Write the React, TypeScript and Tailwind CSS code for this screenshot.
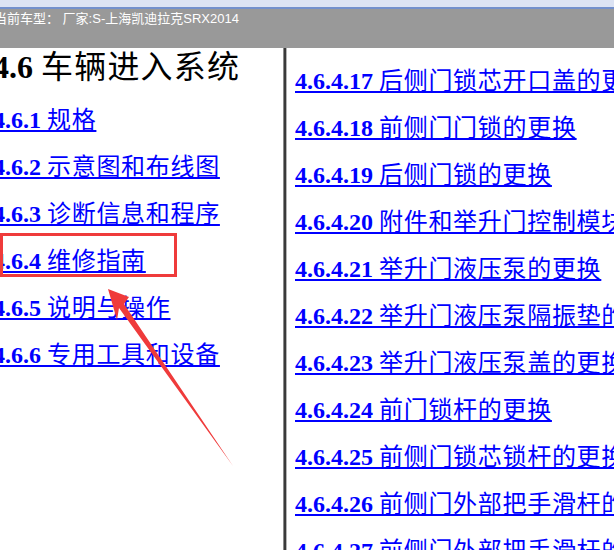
import React from "react";

type Entry = { num: string; title: string };

const chapters: Entry[] = [
  { num: "4.6.1", title: "规格" },
  { num: "4.6.2", title: "示意图和布线图" },
  { num: "4.6.3", title: "诊断信息和程序" },
  { num: "4.6.4", title: "维修指南" },
  { num: "4.6.5", title: "说明与操作" },
  { num: "4.6.6", title: "专用工具和设备" },
];

const repairs: Entry[] = [
  { num: "4.6.4.17", title: "后侧门锁芯开口盖的更换" },
  { num: "4.6.4.18", title: "前侧门门锁的更换" },
  { num: "4.6.4.19", title: "后侧门锁的更换" },
  { num: "4.6.4.20", title: "附件和举升门控制模块的更换" },
  { num: "4.6.4.21", title: "举升门液压泵的更换" },
  { num: "4.6.4.22", title: "举升门液压泵隔振垫的更换" },
  { num: "4.6.4.23", title: "举升门液压泵盖的更换" },
  { num: "4.6.4.24", title: "前门锁杆的更换" },
  { num: "4.6.4.25", title: "前侧门锁芯锁杆的更换" },
  { num: "4.6.4.26", title: "前侧门外部把手滑杆的更换" },
  { num: "4.6.4.27", title: "前侧门外部把手滑杆的更换" },
];

function TocLink({ item }: { item: Entry }) {
  return (
    <a
      href="#"
      className="block whitespace-nowrap text-[24px] leading-[47px] text-[#0000ff] underline decoration-[#0000ff]"
    >
      <b>{item.num}</b> <span className="tracking-[0.7px]">{item.title}</span>
    </a>
  );
}

export default function App() {
  return (
    <div className="relative w-[614px] h-[550px] overflow-hidden bg-white font-['Liberation_Serif','Noto_Sans_CJK_SC',serif]">
      {/* window chrome */}
      <div className="h-[7px] bg-[#dce3f3]" />
      <div className="h-[2px] bg-[#7390cc]" />
      <div className="h-[39px] bg-[#999999] overflow-hidden">
        <div className="-ml-[6px] pt-[3px] whitespace-nowrap text-[13px] leading-[13px] text-white font-['Liberation_Sans','Noto_Sans_CJK_SC',sans-serif]">
          当前车型： 厂家:S-上海凯迪拉克SRX2014
        </div>
      </div>

      <div className="flex h-[502px]">
        {/* left frame: chapter index */}
        <div className="w-[283px] overflow-hidden">
          <div className="-ml-[7px] pt-[3px]">
            <h1 className="whitespace-nowrap text-[32px] leading-[32px] text-black">
              <b>4.6</b> <span className="tracking-[1.2px]">车辆进入系统</span>
            </h1>
            <div className="mt-[14px] flex flex-col">
              {chapters.map((c) => (
                <TocLink key={c.num} item={c} />
              ))}
            </div>
          </div>
        </div>

        {/* frame splitter */}
        <div className="flex w-[4px]">
          <div className="w-[1px] bg-[#8a8a8a]" />
          <div className="w-[2px] bg-[#3a3a3a]" />
          <div className="w-[1px] bg-[#b4b4b4]" />
        </div>

        {/* right frame: repair procedures */}
        <div className="flex-1 overflow-hidden pl-[8px] pt-[10px]">
          <div className="flex flex-col">
            {repairs.map((r) => (
              <TocLink key={r.num} item={r} />
            ))}
          </div>
        </div>
      </div>

      {/* red markup */}
      <svg
        className="absolute left-0 top-0 pointer-events-none"
        width={614}
        height={550}
        viewBox="0 0 614 550"
      >
        <rect
          x={1.5}
          y={234.5}
          width={174}
          height={41}
          fill="none"
          stroke="#ef3b3b"
          strokeWidth={3}
        />
        <polygon
          points="108,289 129,297 124,304 233,466 119,308 117,320"
          fill="#ef3b3b"
        />
      </svg>
    </div>
  );
}
